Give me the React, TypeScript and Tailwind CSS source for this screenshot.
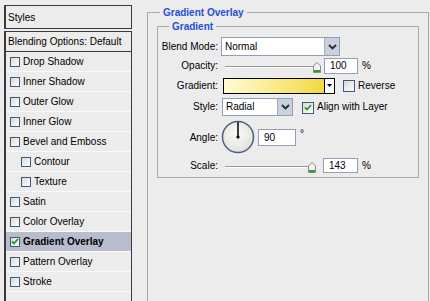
import React from "react";

type BoxProps = { checked?: boolean; size?: number };

function CheckBox({ checked = false, size = 10 }: BoxProps) {
  return (
    <div
      className={`${size === 12 ? "w-[12px] h-[12px]" : "w-[10px] h-[10px]"} shrink-0 border border-[#3a5a82] bg-gradient-to-br from-[#d9d9d3] to-white flex items-center justify-center`}
    >
      {checked && (
        <svg width="8" height="7" viewBox="0 0 8 7">
          <path d="M1 3.5 L3 5.5 L7 1" fill="none" stroke="#1f9d22" strokeWidth="1.8" />
        </svg>
      )}
    </div>
  );
}

function Chevron() {
  return (
    <svg width="9" height="6" viewBox="0 0 9 6">
      <polyline points="1,1 4.5,4.5 8,1" fill="none" stroke="#2a2a2a" strokeWidth="1.8" />
    </svg>
  );
}

function Thumb() {
  return (
    <svg width="8" height="11" viewBox="0 0 8 11" className="absolute top-[-6px]">
      <path d="M0.5 4 L4 0.5 L7.5 4 V10.5 H0.5 Z" fill="#f4f4f0" stroke="#8a8a8a" />
      <rect x="1" y="8" width="6" height="2" fill="#2f9a3a" />
    </svg>
  );
}

function Slider({ width, pos }: { width: number; pos: number }) {
  return (
    <div className="relative h-[3px]" style={{ width }}>
      <div className="h-[1px] bg-[#9a9a9a]" />
      <div className="h-[1px] bg-white" />
      <div className="absolute" style={{ left: pos }}>
        <Thumb />
      </div>
    </div>
  );
}

const styles = [
  { name: "Drop Shadow" },
  { name: "Inner Shadow" },
  { name: "Outer Glow" },
  { name: "Inner Glow" },
  { name: "Bevel and Emboss" },
  { name: "Contour", sub: true },
  { name: "Texture", sub: true },
  { name: "Satin" },
  { name: "Color Overlay" },
  { name: "Gradient Overlay", active: true },
  { name: "Pattern Overlay" },
  { name: "Stroke" },
];

export default function App() {
  return (
    <div className="w-[430px] h-[301px] overflow-hidden bg-[#ececec] flex font-['Liberation_Sans',Arial,sans-serif] text-[10px] text-black">
      {/* Styles list */}
      <div className="w-[134px] shrink-0 pl-[4px] pt-[5px] flex flex-col">
        <div className="w-[128px] h-[24px] border border-[#3a3a3a] border-l-2 flex items-center pl-[2px]">
          Styles
        </div>
        <div className="w-[128px] flex-1 mt-[2px] border border-b-0 border-[#3a3a3a] border-l-2">
          <div className="h-[20px] border-b border-[#3a3a3a] flex items-center pl-[2px]">
            Blending Options: Default
          </div>
          {styles.map((s) => (
            <div
              key={s.name}
              className={`h-[20px] border-b border-[#fafafa] flex items-center gap-[3px] ${s.sub ? "pl-[15px]" : "pl-[4px]"} ${s.active ? "bg-[#b8bccc] font-bold" : ""}`}
            >
              <CheckBox checked={s.active} />
              <span>{s.name}</span>
            </div>
          ))}
        </div>
      </div>

      {/* Settings */}
      <div className="flex-1 pl-[13px] pt-[6px]">
        <fieldset className="w-[277px] h-[320px] border border-[#a9a9a9] px-[9px]">
          <legend className="ml-[3px] px-[3px] font-bold text-[#1f4fd6] leading-[13px]">Gradient Overlay</legend>
          <fieldset className="mt-[1px] w-[262px] border border-[#a9a9a9] pb-[4px]">
            <legend className="ml-[11px] px-[3px] font-bold text-[#1f4fd6] leading-[13px]">Gradient</legend>

            {/* Blend Mode */}
            <div className="mt-[4px] h-[19px] flex items-center">
              <div className="w-[60px] text-right">Blend Mode:</div>
              <div className="ml-[3px] w-[119px] h-[19px] border border-[#8fa0b8] bg-white flex">
                <div className="flex-1 flex items-center pl-[3px]">Normal</div>
                <div className="w-[15px] bg-[#c9d0de] border-l border-[#a6aebd] flex items-center justify-center">
                  <Chevron />
                </div>
              </div>
            </div>

            {/* Opacity */}
            <div className="mt-[1px] h-[17px] flex items-center">
              <div className="w-[60px] text-right">Opacity:</div>
              <div className="ml-[7px] mt-[4px]">
                <Slider width={93} pos={88} />
              </div>
              <div className="ml-[6px] w-[34px] h-[16px] border border-[#8fa0b8] bg-white flex items-center pl-[5px]">100</div>
              <span className="ml-[4px]">%</span>
            </div>

            {/* Gradient */}
            <div className="mt-[3px] h-[17px] flex items-center">
              <div className="w-[60px] text-right">Gradient:</div>
              <div className="ml-[5px] h-[16px] flex border border-black">
                <div className="w-[100px] bg-gradient-to-r from-[#fffbd6] via-[#fbeb8a] to-[#f3d83c]" />
                <div className="w-[10px] bg-white border-l border-black flex items-center justify-center">
                  <svg width="5" height="3" viewBox="0 0 5 3">
                    <path d="M0 0 H5 L2.5 3 Z" fill="#000" />
                  </svg>
                </div>
              </div>
              <div className="ml-[8px]">
                <CheckBox size={12} />
              </div>
              <span className="ml-[3px]">Reverse</span>
            </div>

            {/* Style */}
            <div className="mt-[3px] h-[19px] flex items-center">
              <div className="w-[60px] text-right">Style:</div>
              <div className="ml-[4px] w-[71px] h-[18px] border border-[#8fa0b8] bg-white flex">
                <div className="flex-1 flex items-center pl-[3px]">Radial</div>
                <div className="w-[15px] bg-[#c9d0de] border-l border-[#a6aebd] flex items-center justify-center">
                  <Chevron />
                </div>
              </div>
              <div className="ml-[9px] mt-[2px]">
                <CheckBox checked size={12} />
              </div>
              <span className="ml-[3px]">Align with Layer</span>
            </div>

            {/* Angle */}
            <div className="mt-[4px] h-[34px] flex items-center">
              <div className="w-[60px] text-right">Angle:</div>
              <svg width="34" height="34" viewBox="0 0 34 34" className="ml-[3px]">
                <defs>
                  <radialGradient id="dial" cx="0.45" cy="0.4" r="0.6">
                    <stop offset="0" stopColor="#fbfbf8" />
                    <stop offset="1" stopColor="#e2e2dc" />
                  </radialGradient>
                </defs>
                <circle cx="17" cy="17" r="15.5" fill="url(#dial)" stroke="#4f5f82" strokeWidth="1.5" />
                <line x1="17" y1="17" x2="17" y2="2" stroke="#000" strokeWidth="1.5" />
                <circle cx="17" cy="17" r="1.6" fill="#000" />
              </svg>
              <div className="ml-[3px] w-[38px] h-[17px] border border-[#8fa0b8] bg-white flex items-center pl-[5px]">90</div>
              <span className="ml-[4px] self-start mt-[6px]">°</span>
            </div>

            {/* Scale */}
            <div className="mt-[3px] h-[16px] flex items-center">
              <div className="w-[60px] text-right">Scale:</div>
              <div className="ml-[7px] mt-[4px]">
                <Slider width={87} pos={83} />
              </div>
              <div className="ml-[11px] w-[35px] h-[15px] border border-[#8fa0b8] bg-white flex items-center pl-[5px]">143</div>
              <span className="ml-[4px]">%</span>
            </div>
          </fieldset>
        </fieldset>
      </div>
    </div>
  );
}
